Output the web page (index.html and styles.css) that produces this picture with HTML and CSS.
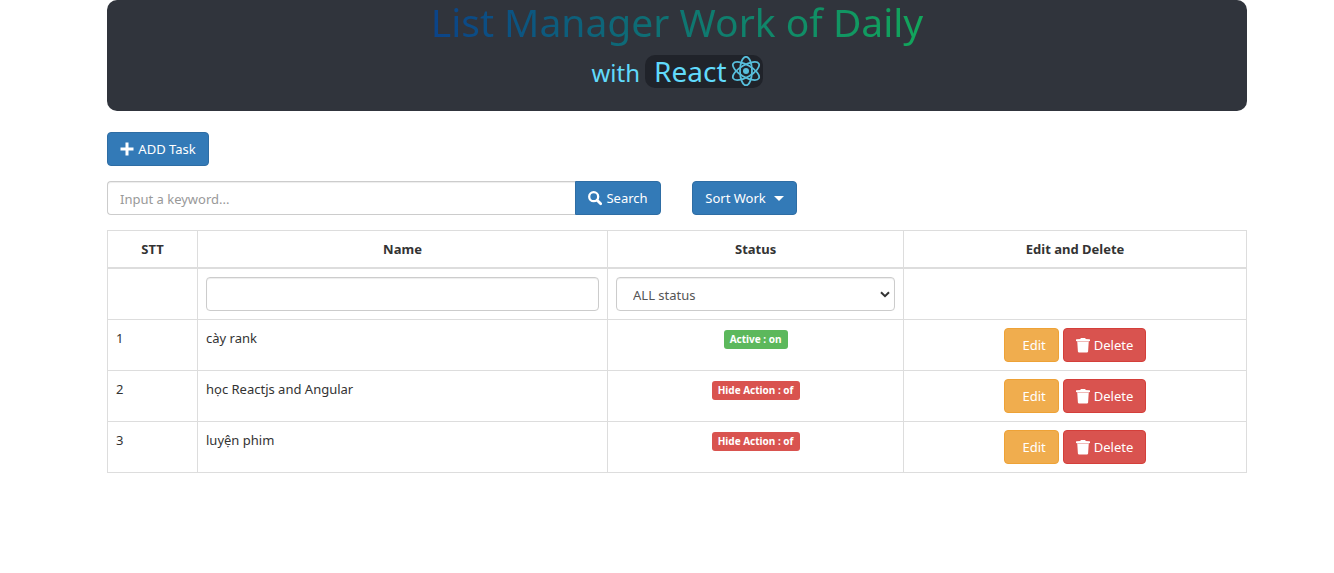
FILE: index.html
```html
<!DOCTYPE html>
<html lang="en">
<head>
<meta charset="utf-8">
<meta name="viewport" content="width=device-width, initial-scale=1">
<title>List Manager Work of Daily</title>
<link rel="stylesheet" href="styles.css">
</head>
<body>
<svg class="sprite" aria-hidden="true">
  <symbol id="trash" viewBox="0 0 14 15">
    <path fill="currentColor" d="M.5 1.200 4.500 1V.3Q4.500 0 5 0h4q.5 0 .5.3V1l4 .2q.5 0 .5.5V3H0V1.700q0-.5.5-.5zM1.300 4h11.400l-.6 9.400Q12 14.500 10.900 14.500H3.100Q2 14.500 1.900 13.400z"/>
    <path fill="currentColor" opacity=".6" d="M.8 3h12.400v1H.8z"/>
  </symbol>
</svg>
<main class="page">
  <header class="banner">
    <h1 class="title">List Manager Work of Daily</h1>
    <p class="subtitle">
      <span>with</span>
      <span class="react">React
        <svg class="react-logo" viewBox="0 0 30 32" aria-hidden="true">
          <g fill="none" stroke="currentColor" stroke-width="1.800">
            <ellipse cx="15" cy="15" rx="14.800" ry="6" transform="rotate(30 15 15)"/>
            <ellipse cx="15" cy="15" rx="14.800" ry="6" transform="rotate(-30 15 15)"/>
            <ellipse cx="15" cy="15" rx="6" ry="14.200"/>
          </g>
          <circle cx="15" cy="15" r="3" fill="currentColor"/>
        </svg>
      </span>
    </p>
  </header>

  <button class="btn btn-primary add" type="button">
    <svg class="icon" viewBox="0 0 14 15" aria-hidden="true"><path fill="currentColor" d="M5.500.5h3v5h5v3h-5v5h-3v-5h-5v-3h5z"/></svg>
    ADD Task
  </button>

  <div class="tools">
    <form class="search" role="search">
      <input class="control" type="text" placeholder="Input a keyword..." aria-label="Keyword">
      <button class="btn btn-primary" type="button">
        <svg class="icon" viewBox="0 0 14 15" aria-hidden="true"><circle cx="5.700" cy="5.700" r="4.500" fill="none" stroke="currentColor" stroke-width="2.300"/><path d="m9.200 9.200 3.500 3.500" stroke="currentColor" stroke-width="2.800" stroke-linecap="round"/></svg>
        Search
      </button>
    </form>
    <button class="btn btn-primary sort" type="button">Sort Work <span class="caret"></span></button>
  </div>

  <table class="tasks">
    <colgroup><col class="col-index"><col class="col-name"><col class="col-status"><col class="col-actions"></colgroup>
    <thead>
      <tr><th scope="col">STT</th><th scope="col">Name</th><th scope="col">Status</th><th scope="col">Edit and Delete</th></tr>
    </thead>
    <tbody>
      <tr>
        <td></td>
        <td><input class="control" type="text" aria-label="Filter by name"></td>
        <td><div class="select-wrap"><select class="control" aria-label="Filter by status"><option>ALL status</option></select><svg class="chevron" viewBox="0 0 10 7" aria-hidden="true"><path d="m1 1.200 4 4 4-4" fill="none" stroke="currentColor" stroke-width="2"/></svg></div></td>
        <td></td>
      </tr>
      <tr>
        <td>1</td><td>cày rank</td>
        <td class="center"><span class="label on">Active : on</span></td>
        <td><div class="actions"><button class="btn btn-edit" type="button">Edit</button><button class="btn btn-delete" type="button"><svg class="icon" aria-hidden="true"><use href="#trash"/></svg>Delete</button></div></td>
      </tr>
      <tr>
        <td>2</td><td>học Reactjs and Angular</td>
        <td class="center"><span class="label off">Hide Action : of</span></td>
        <td><div class="actions"><button class="btn btn-edit" type="button">Edit</button><button class="btn btn-delete" type="button"><svg class="icon" aria-hidden="true"><use href="#trash"/></svg>Delete</button></div></td>
      </tr>
      <tr>
        <td>3</td><td>luyện phim</td>
        <td class="center"><span class="label off">Hide Action : of</span></td>
        <td><div class="actions"><button class="btn btn-edit" type="button">Edit</button><button class="btn btn-delete" type="button"><svg class="icon" aria-hidden="true"><use href="#trash"/></svg>Delete</button></div></td>
      </tr>
    </tbody>
  </table>
</main>
</body>
</html>
```
FILE: styles.css
```css
* { box-sizing: border-box; }

body {
  margin: 0;
  padding-left: 20px;
  background: #fff;
  color: #333;
  font: 13px/20px "Noto Sans", "Open Sans", sans-serif;
}

.sprite { display: none; }

.page {
  max-width: 1140px;
  margin: 0 auto;
}

.banner {
  display: flex;
  flex-direction: column;
  align-items: center;
  margin-bottom: 21px;
  padding-bottom: 22px;
  border-radius: 10px;
  background: #30343c;
}

.title {
  margin: 0;
  padding-bottom: 11px;
  font-size: 39px;
  font-weight: 400;
  line-height: 44px;
  color: transparent;
  background: linear-gradient(to right, #0b4389, #12a65b);
  -webkit-background-clip: text;
  background-clip: text;
}

.subtitle {
  display: flex;
  align-items: baseline;
  gap: 5px;
  margin: 0;
  color: #61dafb;
  font-size: 24px;
  line-height: 33px;
}

.react {
  display: flex;
  align-items: center;
  gap: 4px;
  padding: 0 2px 0 9px;
  border-radius: 10px;
  background: #20232a;
  font-size: 28px;
}

.react-logo {
  width: 30px;
  height: 32px;
  opacity: 0.85;
}

.btn {
  display: inline-flex;
  align-items: center;
  justify-content: center;
  gap: 4px;
  height: 34px;
  padding: 0 11px;
  border: 1px solid transparent;
  border-radius: 4px;
  color: #fff;
  font: inherit;
  white-space: nowrap;
}

.btn-primary { background: #337ab7; border-color: #2e6da4; }
.btn-edit { width: 55px; padding: 0 0 0 5px; background: #f0ad4e; border-color: #eea236; }
.btn-delete { width: 83px; background: #d9534f; border-color: #d43f3a; }

.icon {
  flex: none;
  width: 14px;
  height: 15px;
}

.add {
  display: flex;
  width: 102px;
  margin-bottom: 15px;
}

.tools {
  display: flex;
  gap: 31px;
  margin-bottom: 15px;
}

.search {
  display: flex;
  width: 554px;
}

.search .control {
  flex: 1;
  min-width: 0;
  border-right: 0;
  border-radius: 4px 0 0 4px;
}

.search .btn {
  width: 86px;
  border-radius: 0 4px 4px 0;
}

.sort { width: 105px; gap: 8px; }

.caret {
  border: 5px solid transparent;
  border-top-color: currentColor;
  border-bottom: 0;
}

.control {
  display: block;
  width: 100%;
  height: 34px;
  padding: 1px 12px 0;
  border: 1px solid #ccc;
  border-radius: 4px;
  background: #fff;
  color: #555;
  font: inherit;
  box-shadow: inset 0 1px 1px rgba(0, 0, 0, 0.075);
}

.control::placeholder { color: #999; }

.select-wrap { position: relative; }
.select-wrap .control { padding: 2px 24px 0 16px; appearance: none; }

.chevron {
  position: absolute;
  top: 14px;
  right: 5px;
  width: 10px;
  height: 7px;
  pointer-events: none;
}

.tasks {
  width: 100%;
  table-layout: fixed;
  border-collapse: collapse;
}

.col-index { width: 90px; }
.col-name { width: 36%; }
.col-status { width: 26%; }

.tasks th,
.tasks td {
  padding: 8px;
  border: 1px solid #ddd;
  vertical-align: top;
}

.tasks th {
  border-bottom-width: 2px;
  text-align: center;
}

.center { text-align: center; }

.label {
  display: inline-block;
  padding: 0 6px;
  border-radius: 3px;
  color: #fff;
  font-size: 10px;
  font-weight: 700;
  line-height: 19px;
}

.on { background: #5cb85c; }
.off { background: #d9534f; }

.actions {
  display: flex;
  justify-content: center;
  gap: 4px;
}
```
